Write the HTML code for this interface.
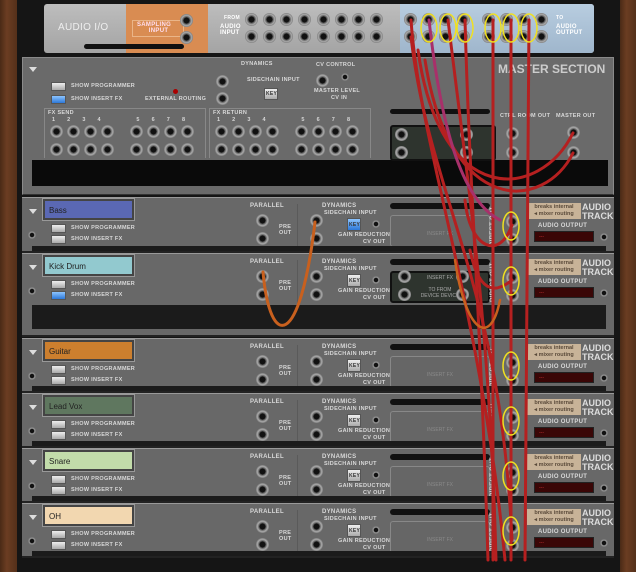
<!DOCTYPE html>
<html><head><meta charset="utf-8">
<style>
*{margin:0;padding:0;box-sizing:border-box}
body{width:636px;height:572px;overflow:hidden;background:#1a1a1a;font-family:"Liberation Sans",sans-serif;position:relative}
.a{position:absolute}
.wood{background:linear-gradient(90deg,#4a2a16,#6b3d22 40%,#55301a)}
.t{position:absolute;font-size:5.5px;font-weight:bold;color:#d8d8d8;letter-spacing:.3px;white-space:nowrap;line-height:1}
.panel{position:absolute;background:#6a6a6a;border:1px solid #8a8a8a;border-bottom-color:#333}
.jk{position:absolute;width:13px;height:13px;border-radius:50%;background:radial-gradient(circle,#111 0 30%,#444 33%,#aaa 55%,#666 80%,#333 100%)}
.sj{position:absolute;width:8px;height:8px;border-radius:50%;background:radial-gradient(circle,#111 0 35%,#999 45%,#444 100%)}
.btn{position:absolute;width:15px;height:9px;background:linear-gradient(#eee,#aaa);border:1px solid #555}
.btn.on{background:linear-gradient(#8cc4ff,#2d78d8)}
.tri{position:absolute;width:0;height:0;border-left:4px solid transparent;border-right:4px solid transparent;border-top:5px solid #ddd}
.name{position:absolute;left:21px;top:1px;width:91px;height:21px;border:2px solid #444;outline:1px solid #999;font-size:8px;color:#222;padding:5px 0 0 4px}
.trk{position:absolute;left:22px;width:592px;background:#686868;border-top:1px solid #999;border-bottom:2px solid #222}
.trk .blk{position:absolute;left:10px;right:8px;bottom:0;height:5px;background:#1b1b1b}
.ins{position:absolute;left:368px;top:17px;width:100px;height:32px;background:#666;border:1px solid #888;border-radius:3px;font-size:5px;color:#8a8a8a;text-align:center;padding-top:15px}
.slot{position:absolute;left:368px;top:5px;width:100px;height:6px;background:#111;border-radius:3px}
.brk{position:absolute;left:505px;top:5px;width:54px;height:16px;background:#c8b398;font-size:5.5px;font-weight:bold;color:#5a4a3a;line-height:7px;text-align:center;padding-top:1px}
.disp{position:absolute;left:512px;top:33px;width:60px;height:11px;background:#3a0606;border:1px solid #222;font-size:5px;color:#c33;padding:2px 0 0 4px}
.at{position:absolute;left:560px;top:5px;font-size:9px;font-weight:bold;color:#ddd;line-height:9px;text-align:right;width:28px}
</style></head><body>
<div class="a wood" style="left:0;top:0;width:17px;height:572px"></div>
<div class="a wood" style="left:620px;top:0;width:16px;height:572px"></div>
<div class="a" style="left:17px;top:0;width:603px;height:572px;background:#151515"></div>

<!-- AUDIO I/O -->
<div class="a" style="left:44px;top:4px;width:550px;height:49px;background:linear-gradient(#bdbdbd,#a4a4a4);border-radius:3px"></div>
<div class="a" style="left:126px;top:4px;width:82px;height:49px;background:#d98c52"></div>
<div class="a" style="left:400px;top:4px;width:194px;height:49px;background:linear-gradient(#b8cde0,#9fb6cc);border-radius:0 3px 3px 0"></div>
<div class="t" style="left:58px;top:23px;font-size:10px;color:#eee;font-weight:normal">AUDIO I/O</div>
<div class="a" style="left:132px;top:20px;width:52px;height:17px;border:1px solid #eab588"></div>
<div class="t" style="left:137px;top:22px;font-size:6px;color:#fde">SAMPLING<br>&nbsp;&nbsp;&nbsp;&nbsp;&nbsp;&nbsp;INPUT</div>
<div class="a" style="left:84px;top:44px;width:100px;height:5px;background:#111;border-radius:3px"></div>
<div class="t" style="left:224px;top:16px;font-size:5px;color:#fff">FROM</div>
<div class="t" style="left:220px;top:24px;font-size:6px;color:#fff">AUDIO<br>INPUT</div>
<div class="t" style="left:556px;top:16px;font-size:5px;color:#fff">TO</div>
<div class="t" style="left:556px;top:24px;font-size:6px;color:#fff">AUDIO<br>OUTPUT</div>

<!-- MASTER -->
<div class="panel" style="left:22px;top:57px;width:592px;height:138px"></div>
<div class="tri" style="left:29px;top:67px"></div>
<div class="a" style="left:32px;top:160px;width:576px;height:26px;background:#0a0a0a"></div>
<div class="t" style="left:498px;top:63px;font-size:12px;color:#ccc;letter-spacing:0">MASTER SECTION</div>
<div class="btn" style="left:51px;top:82px"></div><div class="t" style="left:71px;top:84px">SHOW PROGRAMMER</div>
<div class="btn on" style="left:51px;top:95px"></div><div class="t" style="left:71px;top:97px">SHOW INSERT FX</div>
<div class="a" style="left:173px;top:89px;width:5px;height:5px;border-radius:50%;background:#a00"></div>
<div class="t" style="left:145px;top:97px">EXTERNAL ROUTING</div>
<div class="t" style="left:241px;top:62px">DYNAMICS</div>
<div class="t" style="left:247px;top:78px">SIDECHAIN INPUT</div>
<div class="btn" style="left:264px;top:88px;width:14px;height:12px"></div><div class="t" style="left:266px;top:92px;color:#333;font-size:5px">KEY</div>
<div class="t" style="left:316px;top:63px">CV CONTROL</div>
<div class="t" style="left:314px;top:89px">MASTER LEVEL</div><div class="t" style="left:331px;top:96px">CV IN</div>
<div class="a" style="left:44px;top:108px;width:162px;height:50px;border:1px solid #888;border-bottom:none"></div>
<div class="a" style="left:209px;top:108px;width:162px;height:50px;border:1px solid #888;border-bottom:none"></div>
<div class="t" style="left:48px;top:111px">FX SEND</div><div class="t" style="left:213px;top:111px">FX RETURN</div>
<div class="t" style="left:52px;top:118px;word-spacing:10px">1 2 3 4 &nbsp; 5 6 7 8</div>
<div class="t" style="left:217px;top:118px;word-spacing:10px">1 2 3 4 &nbsp; 5 6 7 8</div>
<div class="a" style="left:390px;top:125px;width:106px;height:36px;background:#2e342e;border:2px solid #111;border-radius:3px"></div>
<div class="a" style="left:390px;top:109px;width:100px;height:5px;background:#111;border-radius:3px"></div>
<div class="t" style="left:500px;top:114px">CTRL ROOM OUT</div>
<div class="t" style="left:556px;top:114px">MASTER OUT</div>

<!-- TRACKS -->
<div class="trk" style="top:197px;height:56px"><div class="name" style="background:#5a68b4">Bass</div></div>
<div class="trk" style="top:253px;height:84px"><div class="name" style="background:#92c9cf">Kick Drum</div><div class="blk" style="height:24px;bottom:6px;left:10px"></div></div>
<div class="trk" style="top:338px;height:55px"><div class="name" style="background:#cc7f2e">Guitar</div></div>
<div class="trk" style="top:393px;height:55px"><div class="name" style="background:#5f775f">Lead Vox</div></div>
<div class="trk" style="top:448px;height:55px"><div class="name" style="background:#c2dcaa">Snare</div></div>
<div class="trk" style="top:503px;height:55px"><div class="name" style="background:#f2d7b0">OH</div></div>

<script>
var common='<div class="tri" style="left:7px;top:11px"></div><div class="btn" style="left:29px;top:26px"></div><div class="t" style="left:49px;top:28px">SHOW PROGRAMMER</div>'+
'<div class="btn INS" style="left:29px;top:37px"></div><div class="t" style="left:49px;top:39px">SHOW INSERT FX</div>'+
'<div class="sj" style="left:6px;top:33px"></div><div class="sj" style="left:578px;top:35px"></div>'+
'<div class="t" style="left:228px;top:5px;font-size:6px">PARALLEL</div>'+
'<div class="jk" style="left:234px;top:16px"></div><div class="jk" style="left:234px;top:34px"></div>'+
'<div class="t" style="left:257px;top:27px">PRE<br>OUT</div><div class="a" style="left:275px;top:6px;width:1px;height:44px;background:#5a5a5a"></div>'+
'<div class="t" style="left:300px;top:5px;font-size:6px">DYNAMICS</div><div class="t" style="left:302px;top:13px">SIDECHAIN INPUT</div>'+
'<div class="jk" style="left:288px;top:16px"></div><div class="jk" style="left:288px;top:34px"></div>'+
'<div class="btn KEY" style="left:325px;top:20px;width:14px;height:13px"></div><div class="t" style="left:327px;top:25px;color:#333;font-size:5px">KEY</div>'+
'<div class="sj" style="left:350px;top:22px"></div>'+
'<div class="t" style="left:316px;top:35px">GAIN REDUCTION</div><div class="t" style="left:341px;top:42px">CV OUT</div>'+
'<div class="slot"></div><div class="ins">INSERT FX</div>'+
'<div class="jk" style="left:484px;top:17px"></div><div class="jk" style="left:484px;top:35px"></div>'+
'<div class="t" style="left:468px;top:48px;transform:rotate(-90deg);transform-origin:0 0;font-size:6px">DIRECT OUT</div>'+
'<div class="brk">breaks internal<br>◂ mixer routing</div><div class="at">AUDIO<br>TRACK</div>'+
'<div class="t" style="left:516px;top:25px;font-size:6px">AUDIO OUTPUT</div><div class="disp">---</div><div class="blk"></div>';
var trks=document.querySelectorAll('.trk');
trks.forEach(function(el,i){
 var h=common;
 if(i==1)h=h.replace('btn INS','btn on INS').replace('<div class="ins">INSERT FX</div>','<div class="ins" style="background:#2e342e;border:2px solid #111;color:#aaa;padding-top:2px">INSERT FX<br><br>TO FROM<br>DEVICE DEVICE</div>');
 if(i==0)h=h.replace('btn KEY','btn on KEY');
 if(i==1){h=h.replace('<div class="blk"></div>','');}
 el.insertAdjacentHTML('beforeend',h);
 if(i==1){el.insertAdjacentHTML('beforeend','<div class="jk" style="left:376px;top:16px"></div><div class="jk" style="left:376px;top:34px"></div><div class="jk" style="left:434px;top:16px"></div><div class="jk" style="left:434px;top:34px"></div>');}
});
function J(x,y,c){var d=document.createElement('div');d.className=c||'jk';d.style.left=x+'px';d.style.top=y+'px';document.body.appendChild(d);}
J(180,14);J(180,31);
[0,1,2,3,4,5,6,7].forEach(function(i){var x=245+i*17.5+(i>3?2:0);J(x,13);J(x,30);});
[0,1,2,3,4,5,6,7].forEach(function(i){var x=404+i*17.5+(i>3?8:0);J(x,13);J(x,30);});
for(var i=0;i<8;i++){var x=50+i*17+(i>3?12:0);J(x,125);J(x,143);x=215+i*17+(i>3?12:0);J(x,125);J(x,143);}
J(216,75);J(216,92);J(395,128);J(395,146);J(460,128);J(460,146);J(506,127);J(506,146);J(567,126);J(567,146);
J(341,73,'sj');J(316,74);
</script>
<svg class="a" style="left:0;top:0" width="636" height="572">
<g fill="none" stroke-linecap="round">
<g stroke="#b52020" stroke-width="3">
<path d="M411,20 C420,150 480,300 505,560"/>
<path d="M411,37 C430,200 500,280 512,540"/>
<path d="M448,20 C470,200 490,330 496,560"/>
<path d="M465,20 C470,200 480,300 488,560"/>
<path d="M493,20 L493,560"/>
<path d="M511,20 L511,560"/>
<path d="M529,20 L525,560"/>
<path d="M418,50 C440,210 540,200 573,133"/>
<path d="M425,60 C450,220 545,210 573,153"/>
<path d="M465,200 C470,250 500,260 512,225"/>
<path d="M470,250 C480,300 500,290 512,280"/>
</g>
<path d="M429,20 C440,120 460,200 500,220" stroke="#a8306a" stroke-width="3"/>
<path d="M263,272 C270,350 300,350 315,222" stroke="#c8601e" stroke-width="3"/>
<path d="M455,260 C465,330 490,350 500,300" stroke="#c8601e" stroke-width="2.5"/>
</g>
<g fill="none" stroke="#f0e020" stroke-width="1.5">
<ellipse cx="429" cy="28" rx="8" ry="14"/><ellipse cx="448" cy="28" rx="8" ry="14"/><ellipse cx="465" cy="28" rx="8" ry="14"/>
<ellipse cx="493" cy="28" rx="8" ry="14"/><ellipse cx="511" cy="28" rx="8" ry="14"/><ellipse cx="529" cy="28" rx="8" ry="14"/>
<ellipse cx="511" cy="226" rx="8" ry="14"/><ellipse cx="511" cy="281" rx="8" ry="14"/><ellipse cx="511" cy="366" rx="8" ry="14"/>
<ellipse cx="511" cy="421" rx="8" ry="14"/><ellipse cx="511" cy="476" rx="8" ry="14"/><ellipse cx="511" cy="531" rx="8" ry="14"/>
</g>
</svg>
</body></html>
